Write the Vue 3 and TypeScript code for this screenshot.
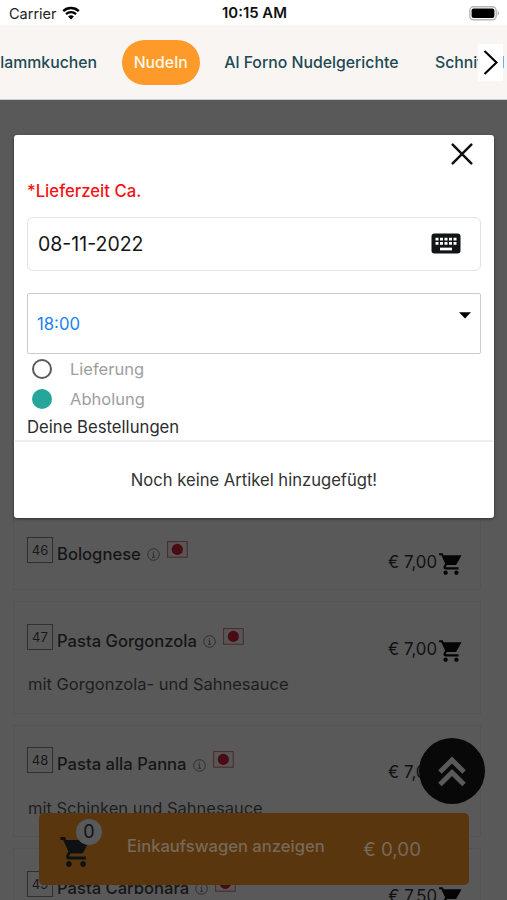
<script setup lang="ts">
import { ref } from 'vue'

interface Dish {
  no: number
  name: string
  description?: string
  price: string
}

const tabs = ['Flammkuchen', 'Nudeln', 'Al Forno Nudelgerichte', 'Schnitzel']
const activeTab = ref('Nudeln')

const dishes: Dish[] = [
  { no: 46, name: 'Bolognese', price: '€ 7,00' },
  { no: 47, name: 'Pasta Gorgonzola', description: 'mit Gorgonzola- und Sahnesauce', price: '€ 7,00' },
  { no: 48, name: 'Pasta alla Panna', description: 'mit Schinken und Sahnesauce', price: '€ 7,00' },
  { no: 49, name: 'Pasta Carbonara', price: '€ 7,50' },
]

const modes = ['Lieferung', 'Abholung']
const mode = ref('Abholung')
const cartPath =
  'M7 18c-1.1 0-1.99.9-1.99 2S5.9 22 7 22s2-.9 2-2-.9-2-2-2zM1 2v2h2l3.6 7.59-1.35 2.45c-.16.28-.25.61-.25.96 0 1.1.9 2 2 2h12v-2H7.42c-.14 0-.25-.11-.25-.25l.03-.12.9-1.63h7.45c.75 0 1.41-.41 1.75-1.03L21.7 4H5.21l-.94-2H1zm16 16c-1.1 0-1.99.9-1.99 2s.89 2 1.99 2 2-.9 2-2-.9-2-2-2z'
</script>

<template>
  <div class="screen">
    <header class="status">
      <div class="carrier">
        <span>Carrier</span>
        <svg class="wifi" width="18" height="14" viewBox="0 0 18 14" fill="none" stroke="#000">
          <path d="M1.2 5.1a11.4 11.4 0 0 1 15.6 0" stroke-width="2.5" />
          <path d="M4 8.1a7.3 7.3 0 0 1 10 0" stroke-width="2.3" />
          <path d="M6.1 10.5a4.3 4.3 0 0 1 5.8 0L9 13.6z" fill="#000" stroke="none" />
        </svg>
      </div>
      <strong class="clock">10:15 AM</strong>
      <svg class="battery" width="31" height="15" viewBox="0 0 31 15">
        <rect x=".8" y=".8" width="26.4" height="13" rx="3.8" fill="#fff" stroke="#b5b5b5" stroke-width="1.4" />
        <rect x="2.6" y="2.6" width="22.8" height="9.4" rx="2" fill="#000" />
        <path d="M28.6 5c1.9.6 1.9 4.1 0 4.7z" fill="#b5b5b5" />
      </svg>
    </header>

    <nav class="tabs">
      <div class="track">
        <button v-for="tab in tabs" :key="tab" class="tab" :class="{ active: tab === activeTab }" @click="activeTab = tab">{{ tab }}</button>
      </div>
      <span class="next">
        <svg width="25" height="37" viewBox="0 0 25 37" fill="none" stroke="#000" stroke-width="2.1">
          <path d="M6.5 7l12 11.5-12 11.5" />
        </svg>
      </span>
    </nav>

    <main class="menu">
      <article v-for="dish in dishes" :key="dish.no" class="card">
        <div class="row">
          <span class="no">{{ dish.no }}</span>
          <h3>{{ dish.name }}</h3>
          <svg class="info" width="13" height="13" viewBox="0 0 13 13" fill="none" stroke="#2f2f2f">
            <circle cx="6.5" cy="6.5" r="5.8" />
            <path d="M5.4 5.7h1.2v3.5M5 9.3h3.2M6.5 3.3v1.2" />
          </svg>
          <svg class="flag" width="21" height="17" viewBox="0 0 21 17">
            <rect x=".6" y=".6" width="19.6" height="15.6" fill="#595656" stroke="#4b292b" />
            <circle cx="10.3" cy="8.4" r="5.6" fill="#490b14" />
          </svg>
        </div>
        <p v-if="dish.description">{{ dish.description }}</p>
        <div class="price">
          <span>{{ dish.price }}</span>
          <svg width="26" height="26" viewBox="0 0 24 24" fill="#050505"><path :d="cartPath" /></svg>
        </div>
      </article>
    </main>

    <button class="top">
      <svg width="28" height="32" viewBox="0 0 28 32" fill="none" stroke="#595959" stroke-width="5">
        <path d="M2 17L14 5l12 12M2 29.5l12-12 12 12" />
      </svg>
    </button>

    <div class="basket">
      <span class="basket-icon">
        <svg width="34" height="36" viewBox="0 0 24 24" preserveAspectRatio="none" fill="#0e1113"><path :d="cartPath" /></svg>
        <b>0</b>
      </span>
      <span class="basket-label">Einkaufswagen anzeigen</span>
      <span class="basket-sum">€ 0,00</span>
    </div>

    <section class="modal">
      <div class="modal-head">
        <svg width="22" height="22" viewBox="0 0 22 22" stroke="#111" stroke-width="2.5" stroke-linecap="round">
          <path d="M1.7 1.7l18.6 18.6M20.3 1.7L1.7 20.3" />
        </svg>
      </div>
      <label class="lead">*Lieferzeit Ca.</label>
      <div class="date">
        <span>08-11-2022</span>
        <svg width="30" height="21" viewBox="0 0 30 21">
          <rect x=".5" y=".5" width="29" height="20" rx="3" fill="#111516" />
          <path d="M4.5 6.2h21M4.5 10.4h21" stroke="#fff" stroke-width="2.8" stroke-dasharray="3 1.5" />
          <path d="M9 16h12" stroke="#fff" stroke-width="2.7" />
        </svg>
      </div>
      <div class="time">
        <span>18:00</span>
        <svg width="12" height="7" viewBox="0 0 12 7"><path d="M0 .2h12L6 6.6z" /></svg>
      </div>
      <div class="modes">
        <label v-for="m in modes" :key="m" @click="mode = m">
          <i :class="{ on: m === mode }"></i><span>{{ m }}</span>
        </label>
      </div>
      <div class="orders">Deine Bestellungen</div>
      <div class="empty">Noch keine Artikel hinzugefügt!</div>
    </section>
  </div>
</template>

<style>
body {
  margin: 0;
}
</style>

<style scoped>
.screen {
  position: relative;
  width: 507px;
  height: 900px;
  overflow: hidden;
  background: #595959;
  font-family: Inter, 'Liberation Sans', sans-serif;
  color: #202020;
}
svg {
  display: block;
  flex: none;
}
button {
  border: 0;
  padding: 0;
  font: inherit;
}
.status {
  height: 25px;
  display: grid;
  grid-template-columns: 1fr auto 1fr;
  align-items: center;
  padding: 1px 7px 0 9px;
  box-sizing: border-box;
  background: #fff;
  font-size: 14.5px;
  color: #222;
}
.carrier {
  display: flex;
  gap: 5px;
  align-items: center;
}
.clock {
  font-size: 14.9px;
  font-weight: 600;
  color: #111;
}
.battery {
  justify-self: end;
}
.tabs {
  position: relative;
  height: 75px;
  box-sizing: border-box;
  background: #f9f5f2;
  border-bottom: 1px solid #d0cecc;
  overflow: hidden;
}
.track {
  display: flex;
  align-items: center;
  gap: 12.6px;
  height: 75px;
  margin-left: -21px;
}
.tab {
  flex: none;
  height: 45px;
  padding: 0 12px;
  border-radius: 23px;
  background: none;
  color: #1d4a54;
  font-size: 15.8px;
  font-weight: 500;
}
.tab.active {
  background: #fd9a29;
  color: #fff6e8;
}
.next {
  position: absolute;
  left: 478px;
  top: 19px;
  background: #fff;
}
.menu {
  display: flex;
  flex-direction: column;
  gap: 11px;
  padding: 414px 26px 0 13px;
}
.card {
  position: relative;
  flex: none;
  box-sizing: border-box;
  min-height: 76px;
  padding: 22px 14px 17.5px 13px;
  border: 1px solid #545454;
}
.row {
  display: flex;
  align-items: center;
  height: 25px;
}
.no {
  width: 26px;
  height: 26px;
  box-sizing: border-box;
  border: 1px solid #303030;
  font-size: 13px;
  line-height: 24px;
  text-align: center;
  color: #181818;
}
h3 {
  margin: 8px 6px 0 4px;
  font-size: 16.6px;
  line-height: 22px;
  font-weight: 500;
  color: #161616;
}
.info {
  margin-top: 10px;
}
.flag {
  margin: 0 0 1px 7px;
}
p {
  margin: 24px 0 0 1px;
  font-size: 16.5px;
  line-height: 22px;
  color: #1e1e1e;
}
.price {
  position: absolute;
  right: 16px;
  top: 31px;
  display: flex;
  align-items: center;
  gap: 1px;
  font-size: 16.8px;
  color: #111;
}
.price svg {
  margin-top: 5px;
}
.top {
  position: absolute;
  left: 419px;
  top: 738px;
  width: 66px;
  height: 66px;
  border-radius: 50%;
  background: #080808;
  display: grid;
  place-items: center;
}
.basket {
  position: absolute;
  left: 39px;
  top: 813px;
  width: 430px;
  height: 72px;
  box-sizing: border-box;
  padding: 0 48px 0 20px;
  border-radius: 5px;
  background: #59360e;
  color: #77695a;
  display: flex;
  align-items: center;
}
.basket-icon {
  position: relative;
  padding-top: 5px;
}
.basket-icon b {
  position: absolute;
  left: 17px;
  top: -10px;
  width: 26px;
  height: 26px;
  border-radius: 50%;
  background: #58595c;
  color: #111;
  font-size: 18px;
  line-height: 25px;
  font-weight: 400;
  text-align: center;
}
.basket-label {
  margin: 0 auto 6px 34px;
  font-size: 16.6px;
  font-weight: 500;
}
.basket-sum {
  font-size: 18.8px;
}
.modal {
  position: absolute;
  left: 14px;
  top: 135px;
  width: 480px;
  height: 383px;
  box-sizing: border-box;
  border-radius: 3px;
  background: #fff;
  box-shadow: 0 1px 3px rgba(0, 0, 0, 0.5);
}
.modal-head {
  display: flex;
  justify-content: flex-end;
  padding: 8px 21px 0 0;
}
.lead {
  display: block;
  margin: 15px 0 0 13px;
  font-size: 16.7px;
  line-height: 23px;
  font-weight: 500;
  color: #f41212;
}
.date,
.time {
  box-sizing: border-box;
  display: flex;
  justify-content: space-between;
}
.date {
  height: 54px;
  margin: 14px 13px 0;
  padding: 0 19px 2px 10px;
  align-items: center;
  border: 1px solid #e3e3e3;
  border-radius: 6px;
  font-size: 19.5px;
  color: #161616;
}
.date span {
  padding-top: 2px;
}
.time {
  height: 61px;
  margin: 22px 13px 0;
  padding: 19px 9px 0 9px;
  border: 1px solid #ccc;
  border-radius: 2px;
  font-size: 16.7px;
  line-height: 23px;
  color: #1880f0;
}
.time svg {
  color: #000;
  margin-top: -1px;
}
.modes label {
  display: flex;
  align-items: center;
  height: 30px;
  padding-left: 18px;
  gap: 18px;
  font-size: 16.5px;
  color: #9e9e9e;
}
.modes i {
  width: 20px;
  height: 20px;
  box-sizing: border-box;
  border: 2px solid #5a5a5a;
  border-radius: 50%;
}
.modes i.on {
  border-color: #26a69a;
  background: #26a69a;
}
.orders {
  margin: 0 1px;
  padding: 1px 0 0 12px;
  height: 25px;
  line-height: 24px;
  border-bottom: 2px solid #eee;
  font-size: 16.7px;
  color: #2c2c2c;
}
.empty {
  padding-top: 27px;
  text-align: center;
  font-size: 16.6px;
  line-height: 22px;
  color: #333;
}
</style>
